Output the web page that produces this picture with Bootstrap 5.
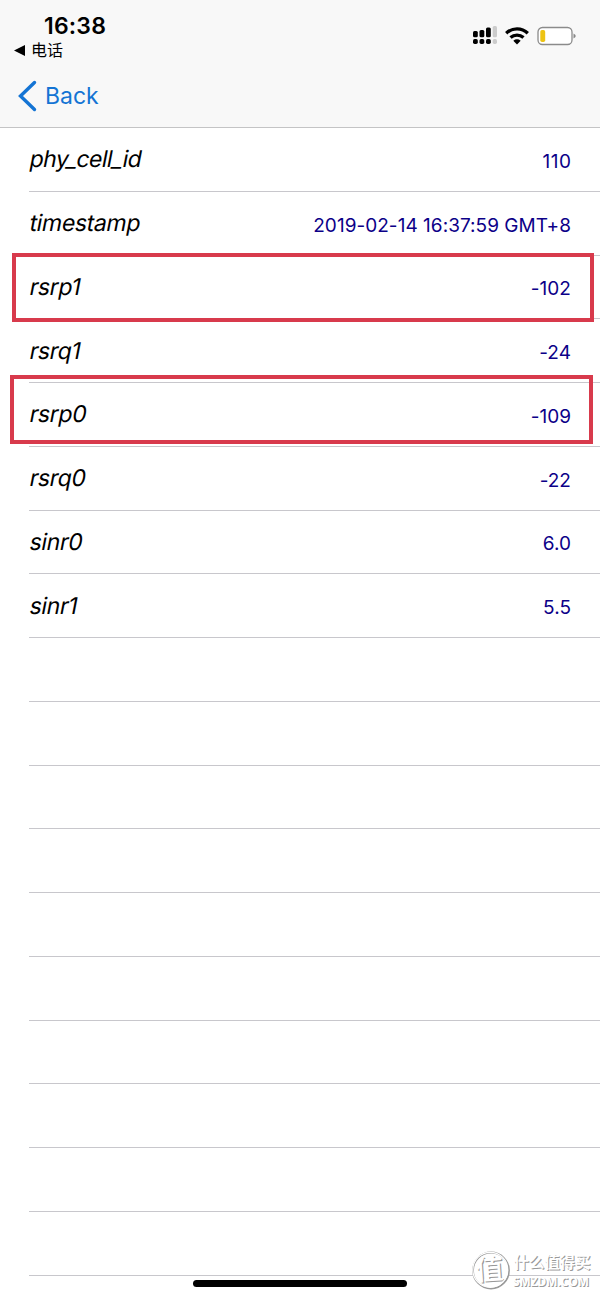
<!DOCTYPE html>
<html lang="zh-CN">
<head>
<meta charset="utf-8">
<meta name="viewport" content="width=device-width, initial-scale=1">
<title>Back</title>
<link href="https://cdn.jsdelivr.net/npm/bootstrap@5.3.0/dist/css/bootstrap.min.css" rel="stylesheet">
<style>
body{font-family:Inter,"Noto Sans CJK SC",sans-serif;background:#fff;color:#000;width:600px;height:1299px;overflow:hidden}
.top-area{height:128px;background:#f8f8f8;border-bottom:1px solid #c4c4c5}
.status-left{padding:11px 0 0 14px}
.clock{font-size:23px;font-weight:600;line-height:30px;padding-left:30px;letter-spacing:.2px}
.return-app{font-size:16px;line-height:19px;gap:6px}
.status-icons{padding:26px 24px 0 0;gap:8px}
.back-link{color:#1474d4;font-size:23px;line-height:32px;padding:20px 0 0 18px;gap:8px;width:max-content}
.data-row.list-group-item,.data-row.list-group-item:last-child{height:63.75px;margin-left:29px;padding:0 29px 0 0;border:0;border-bottom:1px solid #c8c7cc;border-radius:0;background:transparent;color:#000}
.key{font-size:23px;line-height:28px;letter-spacing:-.35px;transform:skewX(-11deg);margin-left:.5px}
.key-tight{letter-spacing:-.55px}
.val{font-size:19px;line-height:24px;color:#0c0088;padding-top:5px;letter-spacing:.03px}
.val-wide{letter-spacing:.5px;margin-right:-.5px}
.frame{border:4px solid #d83a4c;width:583px;height:69px;pointer-events:none}
.frame-a{left:12px;top:253px;width:582px}
.frame-b{left:10px;top:375px}
.home-bar{width:214px;height:7px;border-radius:4px;background:#000;left:193px;top:1280px}
.brand{left:470px;top:1249px;width:124px;height:44px;overflow:visible}
</style>
</head>
<body class="position-relative">
<header class="top-area">
  <div class="d-flex justify-content-between align-items-start">
    <div class="status-left">
      <div class="clock">16:38</div>
      <div class="return-app d-flex align-items-center">
        <svg width="11" height="11" viewBox="0 0 11 11"><path d="M0 5.500 11 0v11z"/></svg><span>电话</span>
      </div>
    </div>
    <div class="status-icons d-flex align-items-start">
      <svg width="24" height="20" viewBox="0 0 24 20">
        <rect x="0" y="5" width="4.800" height="6.200" rx="1.500"/><rect x="6.500" y="4" width="4.800" height="7.200" rx="1.500"/><rect x="13" y="1.500" width="4.800" height="9.700" rx="1.500"/><rect x="19.700" y="0" width="4.300" height="11.200" rx="1.500" fill="#ccc"/>
        <rect x="0" y="13" width="4.800" height="5" rx="1.700"/><rect x="6.500" y="13" width="4.800" height="5" rx="1.700"/><rect x="13" y="13" width="4.800" height="5" rx="1.700"/><rect x="19.700" y="13" width="4.300" height="5" rx="1.700" fill="#ccc"/>
      </svg>
      <svg width="24" height="20" viewBox="0 0 24 20">
        <g fill="none" stroke="#000" stroke-width="3.300"><path d="M1.200 7.200C7.300 1.300 16.700 1.300 22.800 7.200"/><path d="M5.500 11.600C9.300 8.200 14.700 8.200 18.500 11.600"/></g>
        <path d="M8.300 14.700Q12 12 15.700 14.700L12 18.400z"/>
      </svg>
      <svg width="39" height="20" viewBox="0 0 39 20">
        <rect x="1" y="1.500" width="34" height="17" rx="4.500" fill="#fff" stroke="#8b8b8b" stroke-width="1.300"/><rect x="3.300" y="4" width="4.900" height="12" rx="1.700" fill="#edc313"/><path d="M36.500 7.500q4.500 2.500 0 5z" fill="#888"/>
      </svg>
    </div>
  </div>
  <a class="back-link d-flex align-items-center text-decoration-none" href="#">
    <svg width="19" height="32" viewBox="0 0 19 32"><path d="M16.500 2.500 2.500 16l14 13.500" fill="none" stroke="#1474d4" stroke-width="3.400" stroke-linecap="round" stroke-linejoin="miter"/></svg><span>Back</span>
  </a>
</header>
<main class="list-group list-group-flush">
  <div class="data-row list-group-item d-flex justify-content-between align-items-center"><span class="key key-tight">phy_cell_id</span><span class="val val-wide">110</span></div>
  <div class="data-row list-group-item d-flex justify-content-between align-items-center"><span class="key">timestamp</span><span class="val">2019-02-14 16:37:59 GMT+8</span></div>
  <div class="data-row list-group-item d-flex justify-content-between align-items-center"><span class="key">rsrp1</span><span class="val">-102</span></div>
  <div class="data-row list-group-item d-flex justify-content-between align-items-center"><span class="key">rsrq1</span><span class="val">-24</span></div>
  <div class="data-row list-group-item d-flex justify-content-between align-items-center"><span class="key">rsrp0</span><span class="val">-109</span></div>
  <div class="data-row list-group-item d-flex justify-content-between align-items-center"><span class="key">rsrq0</span><span class="val">-22</span></div>
  <div class="data-row list-group-item d-flex justify-content-between align-items-center"><span class="key">sinr0</span><span class="val">6.0</span></div>
  <div class="data-row list-group-item d-flex justify-content-between align-items-center"><span class="key">sinr1</span><span class="val">5.5</span></div>
  <div class="data-row list-group-item"></div><div class="data-row list-group-item"></div>
  <div class="data-row list-group-item"></div><div class="data-row list-group-item"></div>
  <div class="data-row list-group-item"></div><div class="data-row list-group-item"></div>
  <div class="data-row list-group-item"></div><div class="data-row list-group-item"></div>
  <div class="data-row list-group-item"></div><div class="data-row list-group-item"></div>
</main>
<div class="frame frame-a position-absolute"></div>
<div class="frame frame-b position-absolute"></div>
<div class="home-bar position-absolute"></div>
<svg class="brand position-absolute" viewBox="0 0 124 44" font-family="Noto Sans CJK SC, sans-serif">
  <circle cx="20.500" cy="21" r="18.500" fill="#fff"/>
  <g fill="#999" stroke="none">
    <circle cx="21" cy="21.500" r="18" fill="none" stroke="#999" stroke-width="1.800"/>
    <text x="6.700" y="31.500" font-size="28" font-weight="500" transform="rotate(-4 20 21)">值</text>
    <text x="44.500" y="19.500" font-size="15.500" font-weight="700" textLength="77">什么值得买</text>
    <text x="44" y="38" font-size="13" font-family="Open Sans, sans-serif" font-weight="700" textLength="76" lengthAdjust="spacingAndGlyphs">SMZDM.COM</text>
  </g>
  <g fill="#fff" stroke="none">
    <circle cx="20.300" cy="20.800" r="17.500" fill="none" stroke="#fff" stroke-width="1.200"/>
    <text x="5.600" y="30.500" font-size="28" font-weight="500" transform="rotate(-4 20 21)">值</text>
    <text x="43.400" y="18.500" font-size="15.500" font-weight="700" textLength="77">什么值得买</text>
    <text x="43" y="37" font-size="13" font-family="Open Sans, sans-serif" font-weight="700" textLength="76" lengthAdjust="spacingAndGlyphs">SMZDM.COM</text>
  </g>
</svg>
<script src="https://cdn.jsdelivr.net/npm/bootstrap@5.3.0/dist/js/bootstrap.bundle.min.js"></script>
</body>
</html>
